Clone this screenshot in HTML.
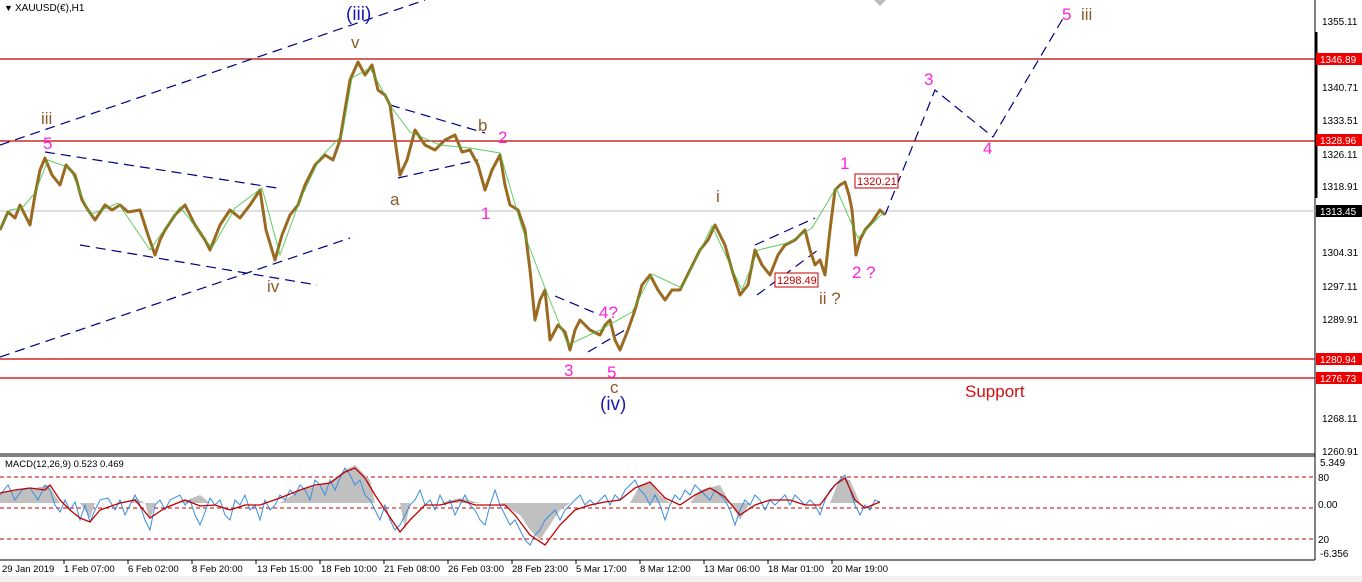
<!DOCTYPE html>
<html><head><meta charset="utf-8"><style>
body{margin:0;background:#fff;width:1362px;height:582px;overflow:hidden;font-family:"Liberation Sans",sans-serif}
svg{display:block}
</style></head><body>
<svg width="1362" height="582" xmlns="http://www.w3.org/2000/svg" font-family="Liberation Sans, sans-serif">
<rect width="1362" height="582" fill="#fff"/>
<rect x="0" y="576" width="1362" height="6" fill="#f0f0f0"/>
<line x1="1315" y1="0" x2="1315" y2="560" stroke="#000"/>
<line x1="0" y1="454" x2="1315" y2="454" stroke="#000"/>
<line x1="0" y1="456" x2="1315" y2="456" stroke="#000"/>
<line x1="0" y1="560" x2="1315" y2="560" stroke="#000"/>
<line x1="1316" y1="32" x2="1316" y2="198" stroke="#000" stroke-width="3"/>
<polygon points="874,0 886,0 880,6" fill="#bbb"/>
<g stroke="#c00000" stroke-width="1.2">
<line x1="0" y1="59" x2="1315" y2="59"/>
<line x1="0" y1="141" x2="1315" y2="141"/>
<line x1="0" y1="359" x2="1315" y2="359"/>
<line x1="0" y1="378" x2="1315" y2="378"/>
</g>
<line x1="0" y1="211" x2="1315" y2="211" stroke="#c0c0c0"/>
<g stroke="#000080" stroke-width="1.2" stroke-dasharray="10,6" fill="none">
<line x1="0" y1="145" x2="425" y2="0"/>
<line x1="0" y1="357" x2="350" y2="238"/>
<line x1="45" y1="152" x2="277" y2="188"/>
<line x1="80" y1="245" x2="317" y2="285"/>
<line x1="390" y1="105" x2="485" y2="133"/>
<line x1="398" y1="178" x2="478" y2="160"/>
<line x1="555" y1="296" x2="600" y2="315"/>
<line x1="588" y1="352" x2="625" y2="330"/>
<line x1="755" y1="245" x2="815" y2="218"/>
<line x1="757" y1="295" x2="818" y2="250"/>
<polyline points="885,215 935,90 993,137 1065,15"/>
</g>
<polyline fill="none" stroke="#9a6a20" stroke-width="3" stroke-linejoin="round" points="0,230 8,212 15,218 20,205 25,215 30,225 35,195 40,170 45,158 52,175 60,185 66,165 75,175 82,200 88,210 95,220 105,205 112,210 120,205 128,212 140,210 148,235 155,255 160,240 165,230 175,215 185,205 195,225 205,240 210,250 220,225 230,210 240,218 250,205 260,190 266,230 275,260 282,235 290,215 298,205 305,185 315,165 325,155 333,160 340,140 345,110 350,80 358,62 365,75 372,65 378,90 385,95 390,105 395,140 400,175 407,160 415,130 425,145 435,150 445,140 455,135 462,152 470,150 478,165 485,190 492,170 500,155 505,185 510,205 518,210 525,230 530,270 535,320 540,300 545,290 550,340 558,325 565,332 570,350 575,330 580,320 590,330 600,335 605,325 610,320 615,340 620,350 628,330 635,310 642,285 650,275 658,290 665,300 672,290 680,290 690,270 700,250 708,240 715,225 720,235 725,245 732,270 740,295 748,285 755,250 762,265 770,275 778,255 785,245 795,240 805,230 810,250 815,265 820,260 825,275 830,230 835,190 840,185 845,182 849,195 852,210 856,255 860,240 865,230 872,222 880,210 885,215"/>
<polyline fill="none" stroke="#3cbf3c" stroke-width="1" opacity="0.8" points="0,228 10,210 22,208 35,193 48,160 70,168 90,215 118,203 150,250 180,207 212,248 235,208 262,188 280,255 300,200 320,158 342,135 352,78 370,68 392,108 410,132 440,145 470,148 500,153 522,228 545,288 568,345 600,330 632,312 652,274 682,288 712,226 742,290 758,250 788,243 812,228 836,188 858,238 884,212"/>
<rect x="855" y="174" width="43" height="14" fill="#fff" stroke="#c00000"/>
<text x="857" y="185" font-size="11" fill="#c00000">1320.21</text>
<rect x="775" y="273" width="43" height="14" fill="#fff" stroke="#c00000"/>
<text x="777" y="284" font-size="11" fill="#c00000">1298.49</text>
<g font-size="17">
<text x="346" y="20" fill="#1a1ab0" font-size="19">(iii)</text>
<text x="351" y="48" fill="#8b5a2b">v</text>
<text x="41" y="124" fill="#8b5a2b">iii</text>
<text x="43" y="149" fill="#ff22dd">5</text>
<text x="267" y="292" fill="#8b5a2b">iv</text>
<text x="390" y="205" fill="#8b5a2b">a</text>
<text x="478" y="131" fill="#8b5a2b">b</text>
<text x="498" y="143" fill="#ff22dd">2</text>
<text x="481" y="219" fill="#ff22dd">1</text>
<text x="599" y="318" fill="#ff22dd">4?</text>
<text x="564" y="376" fill="#ff22dd">3</text>
<text x="607" y="378" fill="#ff22dd">5</text>
<text x="610" y="393" fill="#8b5a2b">c</text>
<text x="600" y="410" fill="#1a1ab0" font-size="19">(iv)</text>
<text x="716" y="202" fill="#8b5a2b">i</text>
<text x="819" y="304" fill="#8b5a2b">ii ?</text>
<text x="852" y="278" fill="#ff22dd">2 ?</text>
<text x="840" y="169" fill="#ff22dd">1</text>
<text x="924" y="85" fill="#ff22dd">3</text>
<text x="983" y="154" fill="#ff22dd">4</text>
<text x="1062" y="20" fill="#ff22dd">5</text>
<text x="1081" y="20" fill="#8b5a2b">iii</text>
<text x="965" y="397" fill="#d01010">Support</text>
</g>
<text x="4" y="11" font-size="9">▼</text>
<text x="15" y="11" font-size="10" fill="#000">XAUUSD(€),H1</text>
<g font-size="10" fill="#000">
<text x="1322" y="25">1355.11</text>
<text x="1322" y="91">1340.71</text>
<text x="1322" y="124">1333.51</text>
<text x="1322" y="158">1326.11</text>
<text x="1322" y="190">1318.91</text>
<text x="1322" y="256">1304.31</text>
<text x="1322" y="290">1297.11</text>
<text x="1322" y="323">1289.91</text>
<text x="1322" y="422">1268.11</text>
<text x="1322" y="455">1260.91</text>
<text x="1320" y="466">5.349</text>
<text x="1318" y="481">80</text>
<text x="1318" y="508">0.00</text>
<text x="1318" y="543">20</text>
<text x="1320" y="557">-6.356</text>
</g>
<g font-size="10" fill="#fff">
<rect x="1316" y="53" width="46" height="12" fill="#e00"/><text x="1320" y="63">1346.89</text>
<rect x="1316" y="134" width="46" height="12" fill="#e00"/><text x="1320" y="144">1328.96</text>
<rect x="1316" y="205" width="46" height="12" fill="#000"/><text x="1320" y="215">1313.45</text>
<rect x="1316" y="353" width="46" height="12" fill="#e00"/><text x="1320" y="363">1280.94</text>
<rect x="1316" y="372" width="46" height="12" fill="#e00"/><text x="1320" y="382">1276.73</text>
</g>
<g stroke="#c00000" stroke-dasharray="4,3">
<line x1="0" y1="477" x2="1315" y2="477"/>
<line x1="0" y1="508" x2="1315" y2="508"/>
<line x1="0" y1="539" x2="1315" y2="539"/>
</g>
<polygon fill="#c0c0c0" points="0,503 0,493 20,490 35,488 48,485 60,503 80,503 90,518 95,503 130,503 135,498 145,503 150,520 155,503 180,503 200,495 210,503 280,503 300,490 320,485 330,482 345,470 355,465 370,480 375,503 400,503 405,530 410,503 440,503 460,498 480,503 500,503 520,515 530,530 540,540 550,525 560,510 570,503 630,503 640,485 650,482 660,495 670,503 690,503 700,490 720,485 730,503 740,520 750,503 830,503 840,478 850,480 860,503 880,503 880,503"/>
<polyline fill="none" stroke="#3a8ee0" stroke-width="1" points="0,495 8,485 15,500 22,490 30,488 38,500 45,485 50,490 55,505 60,512 65,500 70,510 75,502 80,520 85,505 90,522 95,510 100,500 108,498 115,510 120,500 125,515 130,505 135,495 140,505 145,520 150,530 155,505 160,500 165,510 170,500 180,495 185,505 190,500 195,515 200,525 205,512 210,498 215,505 220,500 225,515 230,520 235,500 240,505 245,495 250,510 255,505 260,520 265,500 270,510 275,505 280,495 285,500 290,490 295,495 300,485 305,490 310,500 315,480 320,485 325,495 330,480 335,490 340,478 345,468 350,475 355,485 360,480 365,495 370,500 375,510 380,520 385,505 390,520 395,530 400,525 405,515 410,505 415,500 420,490 425,505 430,500 435,510 440,495 445,505 450,500 455,515 460,505 465,495 470,505 475,510 480,520 485,525 490,505 495,490 500,505 505,515 510,525 515,520 520,530 525,540 530,545 535,535 540,530 545,520 550,515 555,510 560,520 565,510 570,505 575,500 580,495 585,505 590,500 595,505 600,500 605,495 610,505 615,495 620,500 625,490 630,485 635,480 640,490 645,495 650,505 655,495 660,505 665,520 670,505 675,495 680,500 685,490 690,495 695,485 700,490 705,495 710,500 715,490 720,495 725,500 730,510 735,525 740,510 745,500 750,505 755,495 760,500 765,510 770,500 775,505 780,500 785,495 790,505 795,495 800,500 805,505 810,500 815,505 820,515 825,500 830,490 835,485 840,480 845,475 850,490 855,505 860,515 865,505 870,510 875,500 880,502"/>
<polyline fill="none" stroke="#c00000" stroke-width="1.3" points="0,493 15,490 30,488 45,490 50,485 60,500 70,510 80,518 90,522 100,510 120,503 135,500 150,518 165,508 185,500 200,506 215,505 230,510 245,505 260,505 280,498 300,490 315,485 330,483 345,472 355,468 365,478 375,495 385,510 400,532 410,520 425,505 440,505 460,500 475,505 490,505 505,505 515,515 530,535 545,545 560,525 575,510 590,505 605,502 620,500 635,488 650,482 665,498 680,505 695,495 710,488 725,497 740,515 755,505 770,500 790,500 805,505 820,505 835,485 845,478 855,500 865,508 880,502"/>
<text x="5" y="467" font-size="9.5" fill="#000">MACD(12,26,9) 0.523 0.469</text>
<g font-size="9.5" fill="#000">
<text x="2" y="572">29 Jan 2019</text>
<text x="64" y="572">1 Feb 07:00</text>
<text x="128" y="572">6 Feb 02:00</text>
<text x="192" y="572">8 Feb 20:00</text>
<text x="257" y="572">13 Feb 15:00</text>
<text x="321" y="572">18 Feb 10:00</text>
<text x="384" y="572">21 Feb 08:00</text>
<text x="448" y="572">26 Feb 03:00</text>
<text x="512" y="572">28 Feb 23:00</text>
<text x="576" y="572">5 Mar 17:00</text>
<text x="640" y="572">8 Mar 12:00</text>
<text x="704" y="572">13 Mar 06:00</text>
<text x="768" y="572">18 Mar 01:00</text>
<text x="832" y="572">20 Mar 19:00</text>
</g>
<g stroke="#000">
<line x1="64" y1="560" x2="64" y2="564"/><line x1="128" y1="560" x2="128" y2="564"/><line x1="192" y1="560" x2="192" y2="564"/><line x1="256" y1="560" x2="256" y2="564"/><line x1="320" y1="560" x2="320" y2="564"/><line x1="384" y1="560" x2="384" y2="564"/><line x1="448" y1="560" x2="448" y2="564"/><line x1="512" y1="560" x2="512" y2="564"/><line x1="576" y1="560" x2="576" y2="564"/><line x1="640" y1="560" x2="640" y2="564"/><line x1="704" y1="560" x2="704" y2="564"/><line x1="768" y1="560" x2="768" y2="564"/><line x1="832" y1="560" x2="832" y2="564"/>
</g>
</svg>
</body></html>
